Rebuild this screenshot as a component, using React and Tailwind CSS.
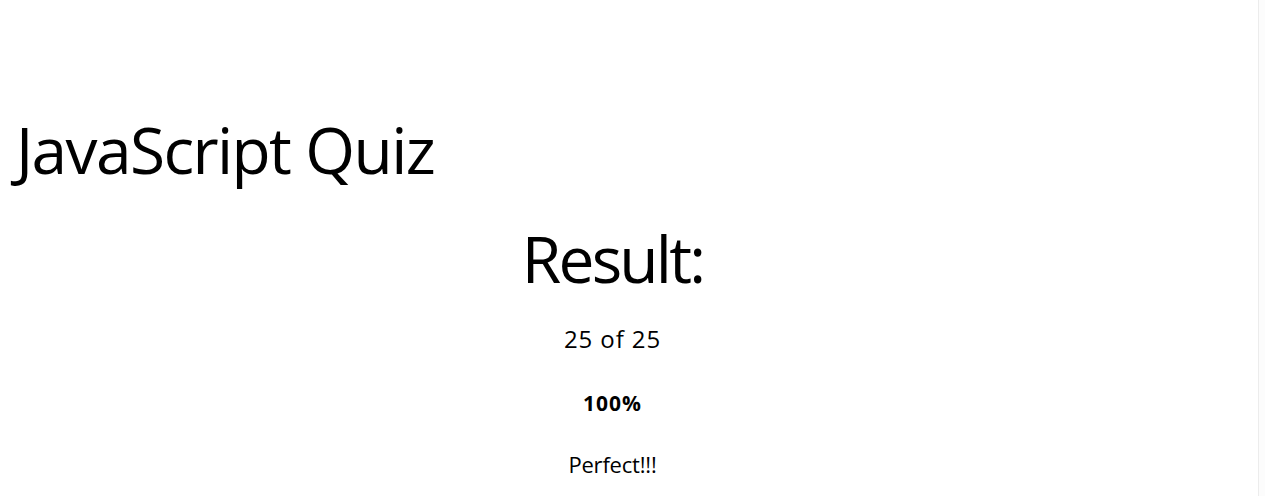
const App = () => {
  return (
    <div className="flex h-[496px] w-full overflow-hidden bg-white text-black font-['Open_Sans',sans-serif]">
      <div className="flex-1">
        <div className="w-[1225px]">
          <h1 className="mt-[118px] pl-[16px] text-[64px] leading-none font-normal tracking-[-1.6px]">JavaScript Quiz</h1>
          <div className="flex flex-col items-center">
            <h2 className="mt-[45px] text-[64px] leading-none font-normal tracking-[-2.8px]">Result:</h2>
            <p className="mt-[36px] text-[24px] leading-none tracking-[0.9px]">25 of 25</p>
            <p className="mt-[42px] text-[21px] leading-none font-bold tracking-[1px]">100%</p>
            <p className="mt-[39px] text-[22px] leading-none tracking-[-0.2px]">Perfect!!!</p>
          </div>
        </div>
      </div>
      <div className="w-[7px] border-l border-[#ececec] bg-[#fcfcfc]" />
    </div>
  );
};

export default App;
